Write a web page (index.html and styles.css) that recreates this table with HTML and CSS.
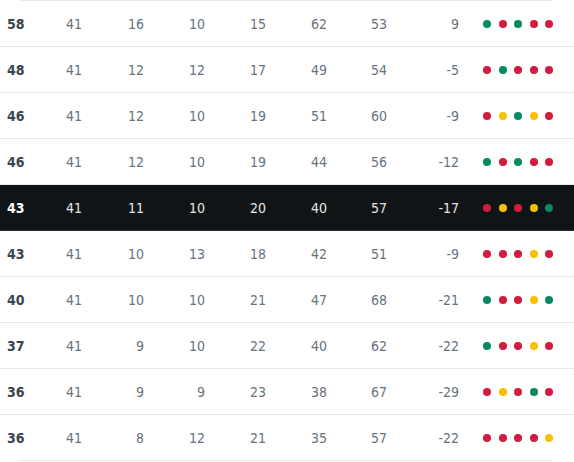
FILE: index.html
```
<!DOCTYPE html>
<html lang="en">
<head>
    <meta charset="UTF-8">
    <meta name="viewport" content="width=device-width, initial-scale=1.0">
    <title>League Table</title>
    <link rel="stylesheet" href="styles.css">
</head>
<body>
    <div class="table">
        <div class="rule"></div>
        <div id="rows"></div>
        <div class="rule"></div>
    </div>
    <script>
        document.addEventListener('DOMContentLoaded', () => {
            const rowsDiv = document.getElementById('rows');

            // pts, played, won, drawn, lost, for, against, diff, form
            const table = [
                [58, 41, 16, 10, 15, 62, 53, 9, 'wlwll'],
                [48, 41, 12, 12, 17, 49, 54, -5, 'lwlll'],
                [46, 41, 12, 10, 19, 51, 60, -9, 'ldwdl'],
                [46, 41, 12, 10, 19, 44, 56, -12, 'wlwll'],
                [43, 41, 11, 10, 20, 40, 57, -17, 'ldldw', true],
                [43, 41, 10, 13, 18, 42, 51, -9, 'llldl'],
                [40, 41, 10, 10, 21, 47, 68, -21, 'wlldw'],
                [37, 41, 9, 10, 22, 40, 62, -22, 'wlldl'],
                [36, 41, 9, 9, 23, 38, 67, -29, 'ldlwl'],
                [36, 41, 8, 12, 21, 35, 57, -22, 'lllld']
            ];

            table.forEach(team => {
                const row = document.createElement('div');
                row.className = team[9] ? 'row current' : 'row';

                let html = `<span class="cell pts">${team[0]}</span>`;
                for (let i = 1; i < 8; i++) {
                    html += `<span class="cell c${i}">${team[i]}</span>`;
                }
                html += '<span class="form">';
                team[8].split('').forEach(r => {
                    html += `<span class="dot ${r}"></span>`;
                });
                html += '</span>';

                row.innerHTML = html;
                rowsDiv.appendChild(row);
            });
        });
    </script>
</body>
</html>
```

FILE: styles.css
```
body {
    margin: 0;
    background-color: #ffffff;
    font-family: "DejaVu Sans Condensed", "DejaVu Sans", sans-serif;
    font-size: 14px;
    color: #67727c;
}

.table {
    width: 574px;
}

.rule {
    height: 1px;
    margin: 0 21px 0 20px;
    background-color: #e6e8ea;
}

.row {
    display: flex;
    align-items: center;
    height: 45px;
    border-bottom: 1px solid #e6e8ea;
}

.row:last-child {
    border-bottom: none;
}

.row.current {
    background-color: #111417;
    border-bottom-color: #2a2e33;
    color: #e4e6e8;
}

.cell {
    text-align: right;
}

.pts {
    width: 23px;
    padding-left: 7px;
    text-align: left;
    font-weight: bold;
    color: #3a444e;
}

.row.current .pts {
    color: #ffffff;
}

.c1 { width: 52px; }
.c2 { width: 62px; }
.c3 { width: 61px; }
.c4 { width: 61px; }
.c5 { width: 61px; }
.c6 { width: 60px; }
.c7 { width: 72px; }

.form {
    display: flex;
    gap: 7.5px;
    margin-left: 24px;
}

.dot {
    width: 8px;
    height: 8px;
    border-radius: 50%;
}

.dot.w {
    background-color: #078a63; /* win */
}

.dot.l {
    background-color: #d21c3b; /* loss */
}

.dot.d {
    background-color: #f7c000; /* draw */
}
```
